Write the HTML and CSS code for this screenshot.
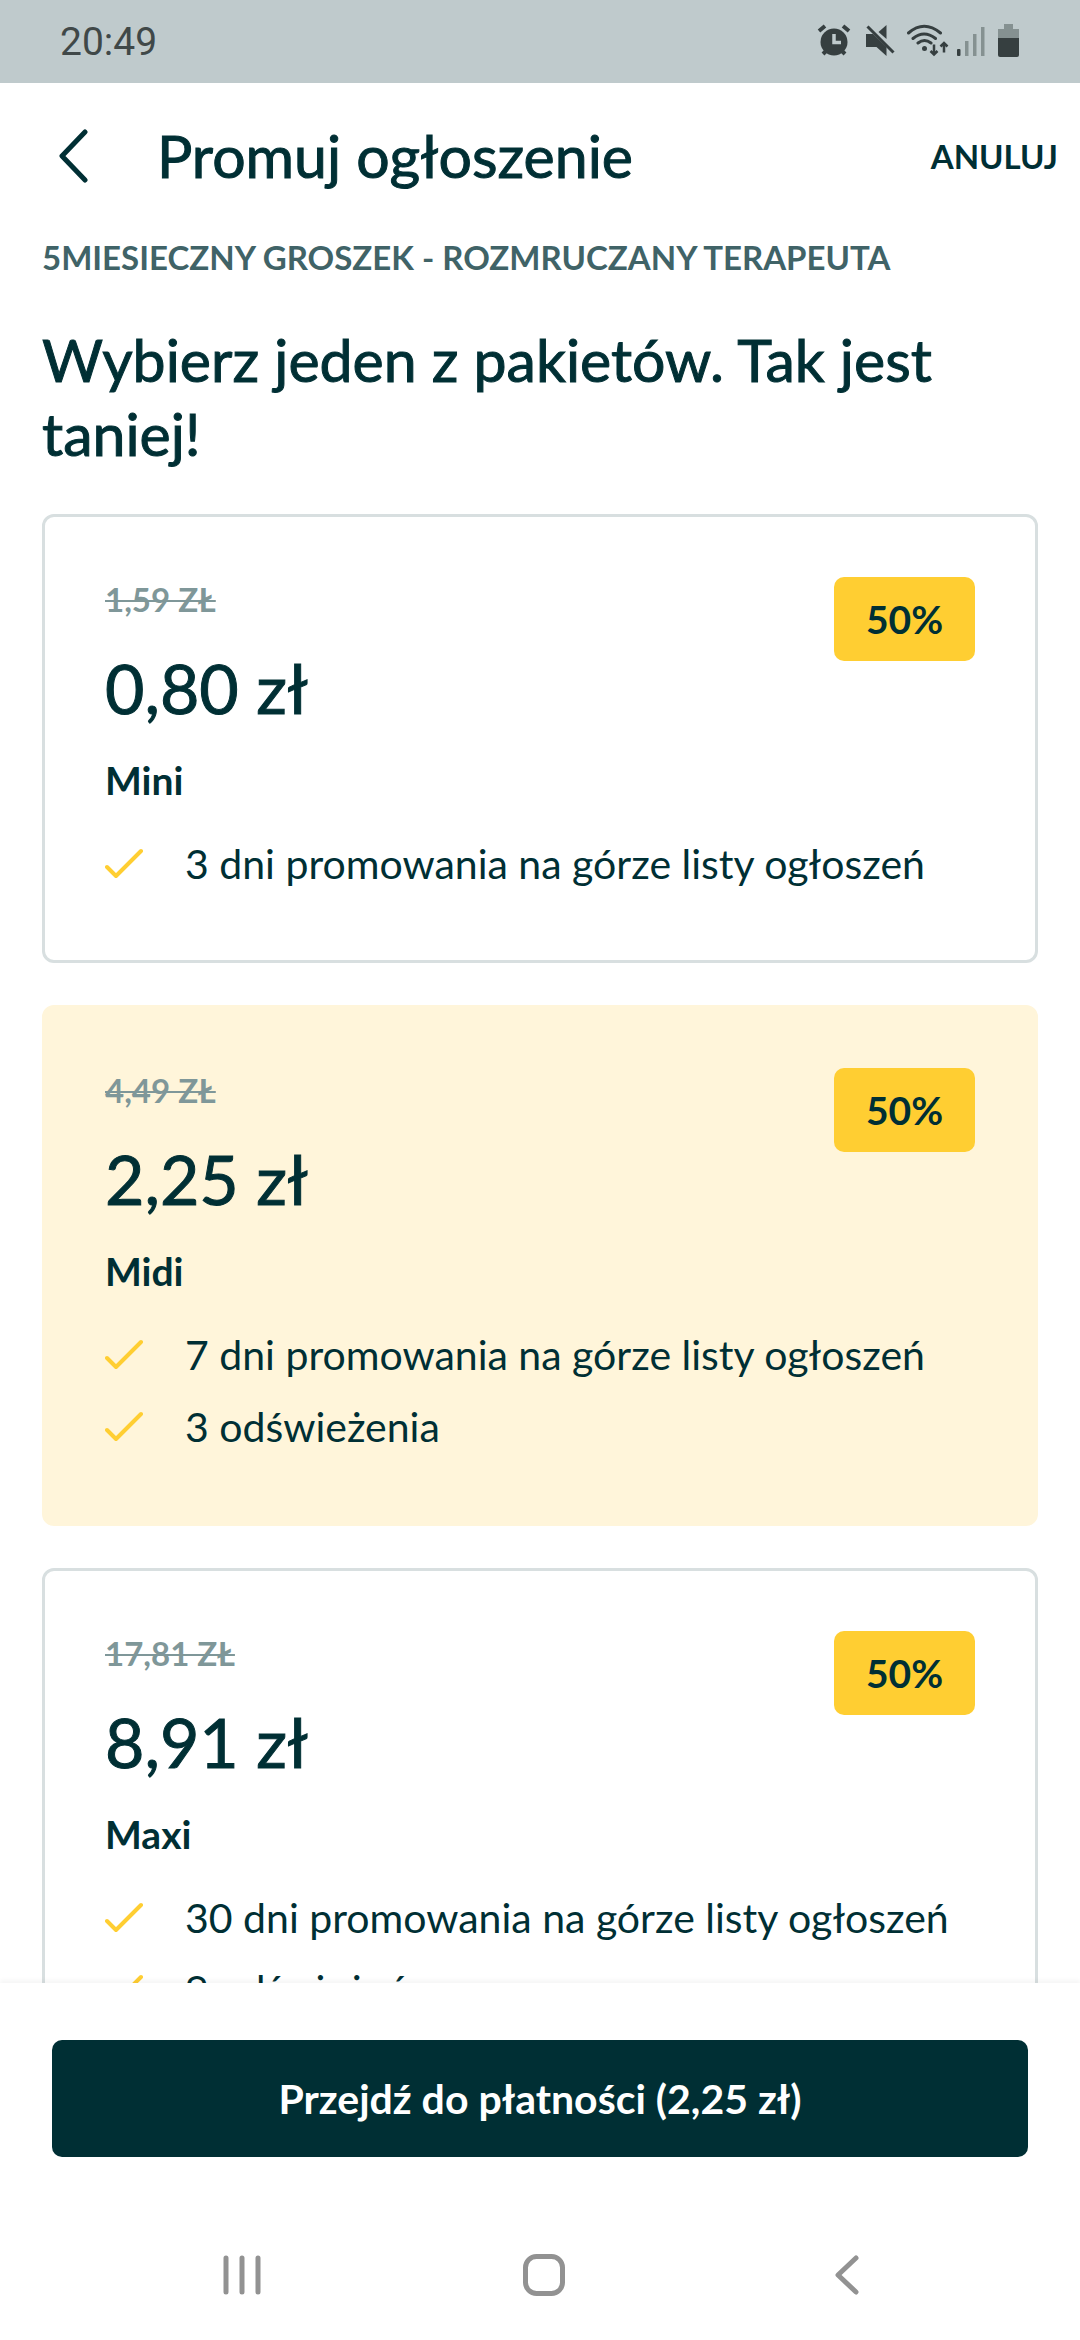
FILE: index.html
```html
<!DOCTYPE html>
<html lang="pl">
<head>
<meta charset="utf-8">
<meta name="viewport" content="width=device-width, initial-scale=1">
<title>Promuj ogłoszenie</title>
<link rel="stylesheet" href="styles.css">
</head>
<body>
<svg class="sprite" aria-hidden="true">
  <symbol id="check" viewBox="0 0 42 42"><path d="M2 24l9 9L36 8" fill="none" stroke="currentColor" stroke-width="4" stroke-linecap="round" stroke-linejoin="round"/></symbol>
</svg>
<div class="status">
  <span class="clock">20:49</span>
  <svg class="status-icons" width="204" height="36" viewBox="816 24 204 36" aria-hidden="true">
    <g fill="#363f40" stroke="#363f40">
      <circle cx="834" cy="42" r="13.500" stroke="none"/>
      <path d="M819 31l6-5M849 31l-6-5M823 54l4-4M845 54l-4-4" stroke-width="4" fill="none"/>
      <path d="M834 34v8.500h7" stroke="#bfcacc" stroke-width="3.500" fill="none"/>
      <path d="M886.500 25v14l-8-7zM866 34h7l13.500 13v9l-10-9H866z" stroke="none"/>
      <path d="M867.500 26.500l26 26" stroke-width="3" fill="none"/>
      <path d="M908.500 33q15.500-13.500 32 0M913 38.500q11-9 22.500 0M918 43q6.500-5 13 0" stroke-width="3" fill="none" stroke-linecap="round"/>
      <circle cx="924.500" cy="48.500" r="2.500" stroke="none"/>
      <path d="M934 44.500v9.500M930.500 51l3.500 3.500 3.500-3.500M944 52.500v-9M940.500 46.500l3.500-3.500 3.500 3.500" stroke-width="2.500" fill="none"/>
      <rect x="957" y="49" width="3.500" height="7" rx="1" stroke="none"/>
    </g>
    <path d="M965 41h3.500v15H965zM973 34h3.500v22H973zM981 27h3.500v29H981zM1004 24h9v5h6v10h-21V29h6z" fill="#859191"/>
    <path d="M998 38h21v17q0 2-2 2h-17q-2 0-2-2z" fill="#363f40"/>
  </svg>
</div>
<header class="topbar">
  <button class="back" type="button" aria-label="Wstecz">
    <svg width="30" height="54" viewBox="0 0 30 54"><path d="M27 3L4 27l23 24" fill="none" stroke="currentColor" stroke-width="5" stroke-linecap="round" stroke-linejoin="round"/></svg>
  </button>
  <h1 class="title">Promuj ogłoszenie</h1>
  <button class="cancel" type="button">ANULUJ</button>
</header>
<main class="content">
  <p class="listing">5MIESIECZNY GROSZEK - ROZMRUCZANY TERAPEUTA</p>
  <h2 class="lead">Wybierz jeden z pakietów. Tak jest taniej!</h2>
  <div class="plans">
    <article class="plan">
      <input class="radio" type="radio" name="plan" id="mini">
      <div class="plan-head">
        <div>
          <del class="old">1,59 ZŁ</del>
          <p class="price">0,80 zł</p>
        </div>
        <span class="badge">50%</span>
      </div>
      <label class="name" for="mini">Mini</label>
      <ul class="perks">
        <li class="perk"><svg class="tick"><use href="#check"/></svg>3 dni promowania na górze listy ogłoszeń</li>
      </ul>
    </article>
    <article class="plan selected">
      <input class="radio" type="radio" name="plan" id="midi" checked>
      <div class="plan-head">
        <div>
          <del class="old">4,49 ZŁ</del>
          <p class="price">2,25 zł</p>
        </div>
        <span class="badge">50%</span>
      </div>
      <label class="name" for="midi">Midi</label>
      <ul class="perks">
        <li class="perk"><svg class="tick"><use href="#check"/></svg>7 dni promowania na górze listy ogłoszeń</li>
        <li class="perk"><svg class="tick"><use href="#check"/></svg>3 odświeżenia</li>
      </ul>
    </article>
    <article class="plan">
      <input class="radio" type="radio" name="plan" id="maxi">
      <div class="plan-head">
        <div>
          <del class="old">17,81 ZŁ</del>
          <p class="price">8,91 zł</p>
        </div>
        <span class="badge">50%</span>
      </div>
      <label class="name" for="maxi">Maxi</label>
      <ul class="perks">
        <li class="perk"><svg class="tick"><use href="#check"/></svg>30 dni promowania na górze listy ogłoszeń</li>
        <li class="perk"><svg class="tick"><use href="#check"/></svg>9 odświeżeń</li>
      </ul>
    </article>
  </div>
</main>
<footer class="checkout">
  <button class="pay" type="button">Przejdź do płatności (2,25 zł)</button>
</footer>
<nav class="sysnav" aria-label="System">
  <button class="key" type="button" aria-label="Ostatnie"><svg width="42" height="42" viewBox="0 0 42 42"><path d="M5 4v34M21 4v34M37 4v34"/></svg></button>
  <button class="key" type="button" aria-label="Ekran główny"><svg width="42" height="42" viewBox="0 0 42 42"><rect x="2.500" y="2.500" width="37" height="37" rx="11"/></svg></button>
  <button class="key" type="button" aria-label="Cofnij"><svg width="42" height="42" viewBox="0 0 42 42"><path d="M31 4L13 21l18 17"/></svg></button>
</nav>
</body>
</html>
```
FILE: styles.css
```css
* { box-sizing: border-box; }

body {
  margin: 0;
  height: 100vh;
  display: flex;
  flex-direction: column;
  background: #fff;
  color: #002f34;
  font-family: Lato, "Open Sans", sans-serif;
}

h1, h2, p, ul { margin: 0; padding: 0; }

button {
  border: 0;
  padding: 0;
  background: none;
  color: inherit;
  font: inherit;
}

.sprite { display: none; }

.status {
  flex: none;
  height: 83px;
  padding: 0 60px;
  display: flex;
  align-items: center;
  justify-content: space-between;
  background: #bfcacc;
}

.clock {
  font: 39px/48px Roboto, sans-serif;
  color: #404848;
}

.topbar {
  flex: none;
  height: 146px;
  padding: 0 22px 0 58px;
  display: flex;
  align-items: center;
}

.back { display: flex; }

/* Lato has no medium weight here: a thin stroke thickens the regular one */
.title,
.lead,
.price {
  font-weight: 400;
  -webkit-text-stroke: 1px currentColor;
}

.title {
  flex: 1;
  padding-left: 69px;
  font-size: 59px;
  line-height: 74px;
}

.cancel {
  font-size: 33px;
  font-weight: 700;
}

.content {
  flex: 1;
  min-height: 0;
  overflow: hidden;
  padding: 0 42px;
}

.listing {
  padding-top: 6px;
  font-size: 33px;
  line-height: 44px;
  font-weight: 700;
  color: #406367;
}

.lead {
  padding: 44px 0 43px;
  font-size: 59px;
  line-height: 74px;
}

.plans {
  display: flex;
  flex-direction: column;
  gap: 42px;
}

.plan {
  position: relative;
  padding: 60px;
  border: 3px solid #d8dfe0;
  border-radius: 12px;
}

.selected {
  background: #fff5da;
  border-color: #fff5da;
}

.radio {
  position: absolute;
  opacity: 0;
}

.plan-head {
  display: flex;
  justify-content: space-between;
  align-items: flex-start;
}

.old {
  display: block;
  font-size: 33px;
  line-height: 44px;
  font-weight: 700;
  color: #7f9799;
  text-decoration-thickness: 2px;
}

.price {
  padding-top: 25px;
  font-size: 68px;
  line-height: 84px;
}

.badge {
  width: 141px;
  border-radius: 10px;
  background: #ffce32;
  font-size: 39px;
  line-height: 84px;
  font-weight: 700;
  text-align: center;
}

.name {
  display: block;
  padding-top: 24px;
  font-size: 39px;
  line-height: 52px;
  font-weight: 700;
}

.name::after {
  content: "";
  position: absolute;
  inset: 0;
}

.perks {
  padding-top: 22px;
  list-style: none;
}

.perk {
  display: flex;
  align-items: center;
  gap: 38px;
  padding: 10px 0;
  font-size: 41px;
  line-height: 52px;
}

.tick {
  flex: none;
  width: 42px;
  height: 42px;
  color: #ffce32;
}

.checkout {
  flex: none;
  position: relative;
  padding: 57px 52px;
  background: #fff;
  box-shadow: 0 -3px 4px rgba(0, 0, 0, .04);
}

.pay {
  width: 100%;
  border-radius: 10px;
  background: #002f34;
  color: #fff;
  font-size: 41px;
  line-height: 117px;
  font-weight: 700;
}

.sysnav {
  flex: none;
  height: 126px;
  padding: 0 83px 4px 91px;
  display: flex;
  align-items: center;
  background: #fff;
}

.key {
  flex: 1;
  display: flex;
  justify-content: center;
}

.key svg {
  fill: none;
  stroke: #929292;
  stroke-width: 5;
  stroke-linecap: round;
  stroke-linejoin: round;
}
```
